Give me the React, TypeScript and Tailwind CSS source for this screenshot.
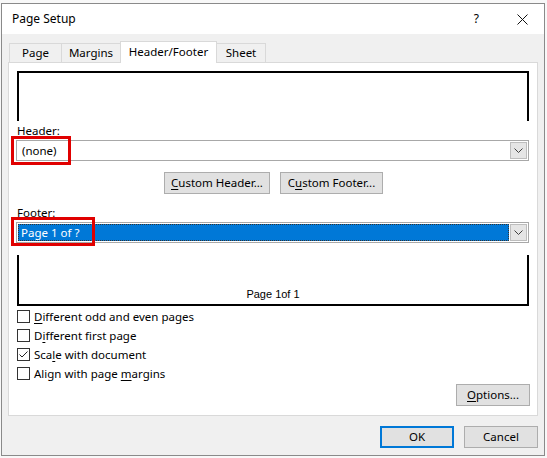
import React from 'react';

// small helper for accelerator-key underlines
function Acc({ children }: { children: React.ReactNode }) {
  return <span className="underline underline-offset-[2px] decoration-[1px]">{children}</span>;
}

function Chevron() {
  return (
    <svg width="9" height="6" viewBox="0 0 9 6" fill="none">
      <path d="M0.5 0.5 L4.5 4.5 L8.5 0.5" stroke="#404040" strokeWidth="1" />
    </svg>
  );
}

function Select({ children }: { children: React.ReactNode }) {
  return (
    <div className="h-[21px] border border-[#a8a8a8] bg-white flex items-stretch">
      <div className="flex-1 flex items-center p-[1px]">{children}</div>
      <div className="w-[17px] my-[1px] mr-[1px] bg-[#e5e5e5] border border-[#bdbdbd] flex items-center justify-center">
        <Chevron />
      </div>
    </div>
  );
}

function Button({ children, w, primary }: { children: React.ReactNode; w: string; primary?: boolean }) {
  return (
    <div
      className={
        'h-[22px] flex items-center justify-center bg-[#e1e1e1] ' +
        w +
        (primary ? ' border-2 border-[#0078d7]' : ' border border-[#adadad]')
      }
    >
      {children}
    </div>
  );
}

function Check({ checked, children }: { checked?: boolean; children: React.ReactNode }) {
  return (
    <div className="h-[19px] flex items-center">
      <div className="w-[13px] h-[13px] border border-[#333333] bg-white flex items-center justify-center">
        {checked && (
          <svg width="11" height="11" viewBox="0 0 11 11" fill="none">
            <path d="M1.5 5.5 L4 8 L9.5 2.5" stroke="#222" strokeWidth="1" />
          </svg>
        )}
      </div>
      <span className="ml-[4px]">{children}</span>
    </div>
  );
}

const tabs = [
  { label: 'Page', w: 'w-[53px]' },
  { label: 'Margins', w: 'w-[60px]' },
  { label: 'Header/Footer', w: 'w-[97px]' },
  { label: 'Sheet', w: 'w-[50px]' },
];

export default function App() {
  return (
    <div className="w-[547px] h-[458px] bg-[#f8f8f8] pl-[1px] pt-[3px] overflow-hidden font-['Noto_Sans',sans-serif] text-[11.5px] leading-[16px] text-black">
      <div className="w-[544px] h-[453px] border border-[#8a8a8a] bg-[#f0f0f0] flex flex-col">
        {/* title bar */}
        <div className="h-[30px] bg-white flex items-center pl-[10px] shrink-0 text-[12px]">
          <span>Page Setup</span>
          <span className="ml-auto mr-[38px]">?</span>
          <svg width="11" height="11" viewBox="0 0 11 11" className="mr-[16px]">
            <path d="M0.5 0.5 L10.5 10.5 M10.5 0.5 L0.5 10.5" stroke="#111" strokeWidth="1" />
          </svg>
        </div>

        {/* tab strip */}
        <div className="flex items-end pl-[7px] pt-[7px] h-[28px] shrink-0">
          {tabs.map((t) =>
            t.label === 'Header/Footer' ? (
              <div
                key={t.label}
                className={
                  'relative z-10 -mb-px -ml-px h-[22px] bg-white border border-b-0 border-[#d9d9d9] flex items-center justify-center pb-[2px] ' +
                  t.w
                }
              >
                {t.label}
              </div>
            ) : (
              <div
                key={t.label}
                className={
                  'h-[19px] bg-[#f0f0f0] border border-b-0 border-[#d9d9d9] -ml-px first:ml-0 flex items-center justify-center ' +
                  t.w
                }
              >
                {t.label}
              </div>
            )
          )}
        </div>

        {/* tab panel */}
        <div className="mx-[6px] h-[354px] bg-white border border-[#d9d9d9] flex flex-col px-[8px] pt-[8px] shrink-0">
          {/* header preview */}
          <div className="h-[50px] border-t-2 border-l-2 border-r-2 border-black w-[512px]" />

          <div className="mt-[2px] h-[16px]">Header:</div>
          <div className="relative mt-[1px] -ml-px w-[513px]">
            <Select>
              <span className="pl-[4px]">(none)</span>
            </Select>
            <div className="absolute left-[-5px] top-[-4px] w-[60px] h-[29px] border-[3px] border-[#e00000]" />
          </div>

          <div className="flex justify-center gap-[10px] mt-[11px] ml-[1px]">
            <Button w="w-[106px]">
              <span>
                <Acc>C</Acc>ustom Header...
              </span>
            </Button>
            <Button w="w-[103px]">
              <span>
                C<Acc>u</Acc>stom Footer...
              </span>
            </Button>
          </div>

          <div className="mt-[11px] h-[16px]">Footer:</div>
          <div className="relative mt-[1px] -ml-px w-[513px]">
            <Select>
              <div className="flex-1 h-full bg-[#0078d7] border border-dotted border-[#333] text-white flex items-center pl-[2px]">
                Page 1 of ?
              </div>
            </Select>
            <div className="absolute left-[-5px] top-[-5px] w-[84px] h-[29px] border-[3px] border-[#e00000]" />
          </div>

          {/* footer preview */}
          <div className="mt-[12px] h-[51px] w-[512px] border-l-2 border-r-2 border-b-2 border-black flex items-end justify-center pb-[3px] text-[11px] leading-[14px] font-['Liberation_Sans',sans-serif]">
            Page 1of 1
          </div>

          <div className="mt-[1px] flex flex-col">
            <Check>
              <Acc>D</Acc>ifferent odd and even pages
            </Check>
            <Check>
              D<Acc>i</Acc>fferent first page
            </Check>
            <Check checked>
              Sca<Acc>l</Acc>e with document
            </Check>
            <Check>
              Align with page <Acc>m</Acc>argins
            </Check>
          </div>

          <div className="flex justify-end mt-[1px] mr-[-1px]">
            <Button w="w-[74px]">
              <span>
                <Acc>O</Acc>ptions...
              </span>
            </Button>
          </div>
        </div>

        {/* dialog buttons */}
        <div className="flex justify-end gap-[10px] mt-[10px] mr-[6px]">
          <Button w="w-[74px]" primary>
            OK
          </Button>
          <Button w="w-[74px]">Cancel</Button>
        </div>
      </div>
    </div>
  );
}
